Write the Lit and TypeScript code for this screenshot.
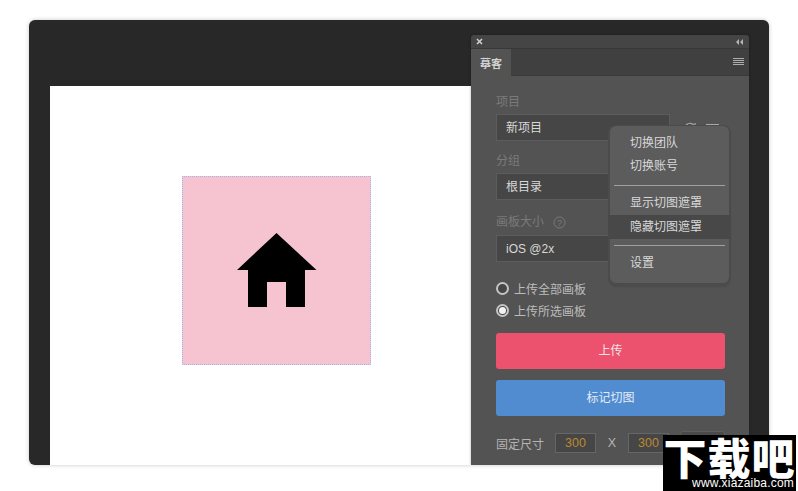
import { LitElement, html, css } from "lit";
import { customElement } from "lit/decorators.js";

@customElement("app-root")
export class AppRoot extends LitElement {
  static styles = css`
    :host {
      display: block;
      position: relative;
      width: 798px;
      height: 491px;
      overflow: hidden;
      background: #fff;
      font-family: "Liberation Sans", "Noto Sans CJK SC", sans-serif;
      font-size: 12px;
    }
    .window {
      position: relative;
      margin: 20px 29px 0;
      width: 740px;
      height: 445px;
      box-sizing: border-box;
      padding: 66px 30px 0 21px;
      background: #282828;
      border-radius: 6px;
      box-shadow: 0 0 4px rgba(0, 0, 0, 0.22);
      overflow: hidden;
    }
    .canvas {
      height: 100%;
      background: #fff;
      display: flex;
      padding: 90px 0 0 132px;
      box-sizing: border-box;
    }
    .artboard {
      width: 189px;
      height: 189px;
      box-sizing: border-box;
      background: #f5c4d0;
      border: 1px dotted #a4b6f0;
      display: flex;
      align-items: center;
      justify-content: center;
    }
    .artboard svg {
      width: 80px;
      height: 75px;
      display: block;
    }
    .panel {
      position: absolute;
      left: 442px;
      top: 15px;
      width: 278px;
      height: 430px;
      background: #535353;
      border-radius: 4px 4px 0 0;
      box-shadow: 0 0 3px rgba(0, 0, 0, 0.3);
      overflow: hidden;
      color: #d6d6d6;
    }
    .strip {
      height: 13px;
      background: #454545;
      display: flex;
      align-items: center;
      justify-content: space-between;
      padding: 0 6px 0 5px;
    }
    .strip svg,
    .tabs svg {
      display: block;
    }
    .tabs {
      height: 28px;
      background: #404040;
      display: flex;
      align-items: stretch;
      justify-content: space-between;
      padding-right: 5px;
      border-top: 1px solid #383838;
      box-sizing: border-box;
      border-bottom: 1px solid #3a3a3a;
    }
    .tab {
      width: 40px;
      background: #535353;
      margin-bottom: -1px;
      display: flex;
      align-items: center;
      justify-content: center;
      color: #d2d2d2;
      font-weight: 700;
      font-size: 11px;
    }
    .tabs svg {
      align-self: center;
    }
    .body {
      padding: 19px 24px 0 25px;
    }
    .label {
      height: 14px;
      line-height: 14px;
      color: #7a7a7a;
      display: flex;
      align-items: center;
      gap: 9px;
    }
    .row {
      display: flex;
      align-items: center;
      margin: 5px 0 13px;
    }
    .row.r2 {
      margin-bottom: 15px;
    }
    .row.r3 {
      margin: 6px 0 0;
    }
    .field {
      box-sizing: border-box;
      width: 174px;
      height: 27px;
      line-height: 27px;
      padding-left: 9px;
      background: #464646;
      border: 1px solid #5c5c5c;
      color: #d8d8d8;
    }
    .tool {
      display: block;
      margin-left: 13px;
    }
    .tool.second {
      margin-left: 9px;
    }
    .radios {
      display: flex;
      flex-direction: column;
      gap: 6px;
      margin-top: 18px;
    }
    .radio {
      height: 16px;
      display: flex;
      align-items: center;
      gap: 5px;
      color: #bcbcbc;
    }
    .dot {
      box-sizing: border-box;
      width: 13px;
      height: 13px;
      border: 2px solid #c4c4c4;
      border-radius: 50%;
      background: #464646;
      display: flex;
      align-items: center;
      justify-content: center;
    }
    .dot.on::after {
      content: "";
      width: 7px;
      height: 7px;
      border-radius: 50%;
      background: #f2f2f2;
    }
    .btn {
      height: 36px;
      line-height: 36px;
      text-align: center;
      border-radius: 3px;
      color: #f0e6e8;
    }
    .red {
      margin-top: 15px;
      background: #ec526e;
    }
    .blue {
      margin-top: 11px;
      background: #518cd0;
      color: #e4ecf6;
    }
    .size {
      display: flex;
      align-items: center;
      margin-top: 17px;
      color: #b4b4b4;
      white-space: nowrap;
    }
    .num {
      box-sizing: border-box;
      flex: none;
      width: 41px;
      height: 20px;
      line-height: 18px;
      text-align: center;
      font-size: 12.5px;
      color: #b98a32;
      background: #464646;
      border: 1px solid #666;
    }
    .size .first {
      margin-left: 11px;
    }
    .x {
      flex: none;
      width: 32px;
      text-align: center;
      font-size: 12.5px;
    }
    .num.extra {
      width: 45px;
      margin-left: 11px;
      margin-top: -4px;
      border-radius: 3px;
      border-color: #5e5e5e;
      background: #4a4a4a;
    }
    .menu {
      position: absolute;
      left: 610px;
      top: 126px;
      width: 119px;
      height: 157px;
      background: #5c5c5c;
      border-radius: 6px;
      box-shadow: 0 1px 0 2px #4b4b4b, 0 3px 3px rgba(0, 0, 0, 0.2);
      color: #d8d8d8;
      padding-top: 6px;
      box-sizing: border-box;
    }
    .item {
      height: 23px;
      line-height: 23px;
      padding-left: 20px;
    }
    .item.hover {
      background: #484848;
      margin: 0 -2px;
      padding-left: 22px;
      height: 24px;
      line-height: 24px;
    }
    .sep {
      height: 1px;
      background: #a0a0a0;
    }
    .sep.a {
      margin: 7px 4px 6px;
    }
    .sep.b {
      margin: 6px 4px 6px;
    }
    .mark {
      position: absolute;
      left: 663px;
      top: 435px;
      width: 133px;
      height: 56px;
      background: #000;
      color: #fff;
      text-align: center;
    }
    .mark .big {
      font-family: "Noto Sans CJK SC", sans-serif;
      font-weight: 900;
      font-size: 43px;
      line-height: 43px;
      height: 41px;
      letter-spacing: 1px;
      white-space: nowrap;
    }
    .mark .url {
      font-family: "Liberation Sans", sans-serif;
      font-size: 12px;
      line-height: 14px;
      text-align: right;
      padding-right: 2px;
      letter-spacing: 0.2px;
      white-space: nowrap;
    }
  `;

  render() {
    return html`
      <div class="window">
        <div class="canvas">
          <div class="artboard">
            <svg viewBox="0 0 80 75">
              <path d="M39.500 0 L79.500 37 H68 V74 H49 V49 H30 V74 H11 V37 H0 Z" fill="#000" />
            </svg>
          </div>
        </div>
        <div class="panel">
          <div class="strip">
            <svg width="7" height="7" viewBox="0 0 7 7"><path d="M1 1 6 6 M6 1 1 6" stroke="#cfcfcf" stroke-width="1.6" /></svg>
            <svg width="7" height="6" viewBox="0 0 7 6"><path d="M3 0V6L0 3Z M7 0V6L4 3Z" fill="#b5b5b5" /></svg>
          </div>
          <div class="tabs">
            <div class="tab">摹客</div>
            <svg width="11" height="8" viewBox="0 0 11 8"><path d="M0 .5H11M0 2.5H11M0 4.5H11M0 6.5H11" stroke="#adadad" /></svg>
          </div>
          <div class="body">
            <div class="label">项目</div>
            <div class="row">
              <div class="field">新项目</div>
              <svg class="tool" width="14" height="14" viewBox="0 0 14 14"><path d="M11.500 5A5 5 0 1 0 12 8 M9 5H12V2" fill="none" stroke="#a8a8a8" stroke-width="1.2" /></svg>
              <svg class="tool second" width="13" height="14" viewBox="0 0 13 14"><path d="M0 3.500H13M0 8H13" stroke="#a8a8a8" /></svg>
            </div>
            <div class="label">分组</div>
            <div class="row r2"><div class="field">根目录</div></div>
            <div class="label">
              画板大小
              <svg width="13" height="13" viewBox="0 0 13 13"><circle cx="6.500" cy="6.500" r="5.500" fill="none" stroke="#7a7a7a" /><text x="6.500" y="9.800" font-size="9" text-anchor="middle" fill="#7a7a7a" font-family="Liberation Sans">?</text></svg>
            </div>
            <div class="row r3"><div class="field">iOS @2x</div></div>
            <div class="radios">
              <div class="radio"><span class="dot"></span>上传全部画板</div>
              <div class="radio"><span class="dot on"></span>上传所选画板</div>
            </div>
            <div class="btn red">上传</div>
            <div class="btn blue">标记切图</div>
            <div class="size">
              固定尺寸
              <div class="num first">300</div>
              <div class="x">X</div>
              <div class="num">300</div>
              <div class="num extra"></div>
            </div>
          </div>
        </div>
      </div>
      <div class="menu">
        <div class="item">切换团队</div>
        <div class="item">切换账号</div>
        <div class="sep a"></div>
        <div class="item">显示切图遮罩</div>
        <div class="item hover">隐藏切图遮罩</div>
        <div class="sep b"></div>
        <div class="item">设置</div>
      </div>
      <div class="mark">
        <div class="big">下载吧</div>
        <div class="url">www.xiazaiba.com</div>
      </div>
    `;
  }
}
